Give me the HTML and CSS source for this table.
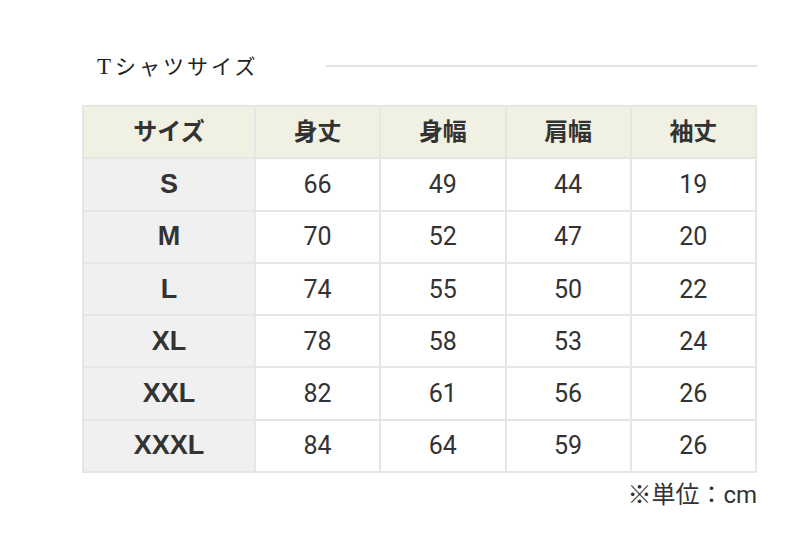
FILE: index.html
```html
<!DOCTYPE html>
<html lang="ja">
<head>
<meta charset="utf-8">
<link rel="stylesheet" href="styles.css">
</head>
<body>
<div class="page">
  <div class="heading">
    <h2 class="title"><span class="t">T</span>シャツサイズ</h2>
    <div class="rule"></div>
  </div>
  <table class="sizes">
    <thead>
      <tr><th class="first">サイズ</th><th>身丈</th><th>身幅</th><th>肩幅</th><th>袖丈</th></tr>
    </thead>
    <tbody>
      <tr><th>S</th><td>66</td><td>49</td><td>44</td><td>19</td></tr>
      <tr><th>M</th><td>70</td><td>52</td><td>47</td><td>20</td></tr>
      <tr><th>L</th><td>74</td><td>55</td><td>50</td><td>22</td></tr>
      <tr><th>XL</th><td>78</td><td>58</td><td>53</td><td>24</td></tr>
      <tr><th>XXL</th><td>82</td><td>61</td><td>56</td><td>26</td></tr>
      <tr><th>XXXL</th><td>84</td><td>64</td><td>59</td><td>26</td></tr>
    </tbody>
  </table>
  <p class="unit">※単位：cm</p>
</div>
</body>
</html>
```
FILE: styles.css
```css
html, body {
  margin: 0;
  padding: 0;
  background: #fff;
}
body {
  font-family: Roboto, "Noto Sans CJK JP", "Noto Sans", sans-serif;
  color: #333;
}
.page {
  width: 675px;
  margin-left: 82px;
  padding-top: 50px;
}
.heading {
  display: flex;
  align-items: center;
  height: 32px;
  margin-bottom: 23px;
}
.title {
  margin: 0 0 0 15px;
  font-family: "Noto Sans CJK JP", sans-serif;
  font-size: 21px;
  font-weight: 400;
  letter-spacing: 3px;
  color: #222;
  line-height: 32px;
  white-space: nowrap;
}
.title .t {
  font-family: "Liberation Serif", "DejaVu Serif", serif;
  font-size: 23px;
  margin-right: 1px;
}
.rule {
  margin-left: auto;
  width: 431px;
  height: 2px;
  background: #e2e2e2;
}
.sizes {
  width: 675px;
  border-collapse: collapse;
  table-layout: fixed;
}
.sizes th, .sizes td {
  border: 2px solid #e6e6e6;
  height: 50.3px;
  padding: 0;
  text-align: center;
  font-size: 25px;
  line-height: 1;
}
.sizes thead th {
  background: #f0f0e3;
  font-weight: 700;
  font-size: 24px;
  color: #333;
}
.sizes th.first {
  width: 170px;
}
.sizes tbody th {
  background: #f0f0f0;
  font-family: "Liberation Sans", Arial, "Noto Sans CJK JP", sans-serif;
  font-weight: 700;
  font-size: 27px;
  color: #333;
}
.sizes td {
  font-weight: 400;
  color: #333;
  background: #fff;
}
.unit {
  margin: 8px 0 0;
  text-align: right;
  font-size: 24px;
  line-height: 28px;
  color: #333;
}
```
